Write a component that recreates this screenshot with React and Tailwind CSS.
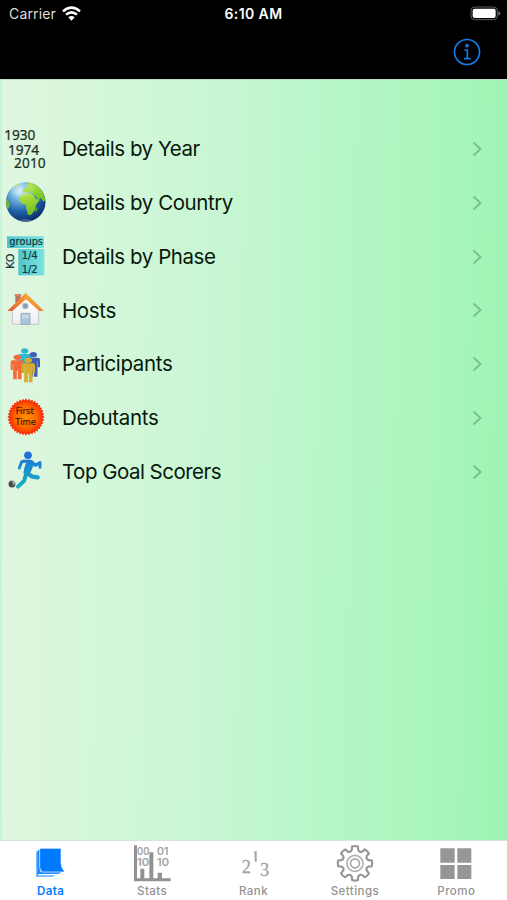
import React from "react";

// List icons share one drawing grid: three units per pixel, 150 x 162.
function ListIcon({ children }) {
  return (
    <svg className="h-[54px] w-[50px] shrink-0" viewBox="0 0 150 162">
      {children}
    </svg>
  );
}

function YearsIcon() {
  return (
    <ListIcon>
      <g fontFamily="'Noto Sans', sans-serif" fontSize="41" fill="#1c3024" stroke="#1c3024" strokeWidth="0.7">
        <text x="13" y="53" textLength="93">1930</text>
        <text x="24" y="98" textLength="93">1974</text>
        <text x="42" y="139" textLength="95">2010</text>
      </g>
    </ListIcon>
  );
}

function GlobeIcon() {
  return (
    <ListIcon>
      <defs>
        <radialGradient id="sea" cx="0.36" cy="0.22" r="0.8">
          <stop offset="0" stopColor="#d4f0fc" />
          <stop offset="0.3" stopColor="#6fb4e0" />
          <stop offset="0.65" stopColor="#2262a8" />
          <stop offset="1" stopColor="#0b2d68" />
        </radialGradient>
        <linearGradient id="land" x1="0" y1="0" x2="0.3" y2="1">
          <stop offset="0" stopColor="#b9e64a" />
          <stop offset="1" stopColor="#74c421" />
        </linearGradient>
        <clipPath id="disc"><circle cx="77" cy="81" r="59" /></clipPath>
      </defs>
      <circle cx="77" cy="81" r="59.5" fill="url(#sea)" />
      <g clipPath="url(#disc)">
        <path d="M60 66 L68 57 L84 55 L100 59 L107 71 L119 74 L108 90 L105 104 L94 119 L84 120 L79 101 L78 89 L66 86 L59 77Z" fill="url(#land)" />
        <path d="M68 53 L71 40 L83 37 L79 31 L88 21 L112 22 L130 43 L139 72 L130 80 L123 70 L116 75 L107 64 L96 55 L83 52 L74 51Z" fill="url(#land)" />
        <path d="M38 37 L47 26 L61 23 L58 30 L47 37Z" fill="#bfd985" />
        <path d="M17 68 L25 78 L30 91 L24 103 L17 97Z" fill="#72b53a" />
        <path d="M107 103 L112 96 L110 109 L106 111Z" fill="#72b53a" />
        <ellipse cx="76" cy="136" rx="20" ry="3" fill="#8fb4dc" opacity="0.4" />
        <ellipse cx="67" cy="44" rx="37" ry="20" fill="#ffffff" opacity="0.15" />
      </g>
    </ListIcon>
  );
}

function PhaseIcon() {
  return (
    <ListIcon>
      <defs>
        <linearGradient id="teal" x1="0" x2="1">
          <stop offset="0" stopColor="#4fc4cd" />
          <stop offset="1" stopColor="#7be3df" />
        </linearGradient>
      </defs>
      <rect x="21" y="22" width="111" height="35" fill="url(#teal)" />
      <rect x="55" y="60" width="78" height="79" fill="url(#teal)" />
      <g fontFamily="'DejaVu Sans', sans-serif" fill="#0e3939" stroke="#0e3939" strokeWidth="0.6">
        <text x="28" y="47" fontSize="29" textLength="101" lengthAdjust="spacingAndGlyphs">groups</text>
        <text x="65" y="91" fontSize="30" textLength="48">1/4</text>
        <text x="65" y="133" fontSize="30" textLength="48">1/2</text>
        <text x="43" y="120" fontSize="30" textLength="47" lengthAdjust="spacingAndGlyphs" transform="rotate(-90 43 120)">KO</text>
      </g>
    </ListIcon>
  );
}

function HouseIcon() {
  return (
    <ListIcon>
      <defs>
        <linearGradient id="roof" x1="0" x2="1">
          <stop offset="0" stopColor="#e65331" />
          <stop offset="0.55" stopColor="#f5a33a" />
          <stop offset="1" stopColor="#ef7d2c" />
        </linearGradient>
        <linearGradient id="wall" x1="0" y1="0" x2="0" y2="1">
          <stop offset="0" stopColor="#ffffff" />
          <stop offset="1" stopColor="#efedf3" />
        </linearGradient>
      </defs>
      <path d="M46 36H62V58H46Z" fill="#b9755d" />
      <path d="M44 33H64V39H44Z" fill="#d98663" />
      <path d="M37 77 L77 42 L116 77 V121 Q116 124 113 124 H40 Q37 124 37 121Z" fill="url(#wall)" stroke="#b3b1bd" strokeWidth="2" />
      <path d="M77 30 L132 84 L118 84 L78 49 L37 84 L22 84Z" fill="url(#roof)" />
      <circle cx="76" cy="69" r="8" fill="#718b9f" stroke="#b5bdc7" strokeWidth="4" />
      <path d="M71 69H81M76 64V74" stroke="#adc2ce" strokeWidth="1.5" />
      <path d="M63 91H90V124H63Z" fill="#a9c6dc" stroke="#94a3b8" strokeWidth="2.5" />
      <path d="M66 95H87V106H66Z" fill="#c2d8e7" />
    </ListIcon>
  );
}

function Person({ x, y, fill }) {
  return (
    <g transform={`translate(${x} ${y})`} fill={fill}>
      <ellipse cx="0" cy="8" rx="11" ry="8" />
      <path d="M-14 17 H14 Q20 17 20 23 V46 H13.5 V28 H12.5 V74 H1.5 V48 H-1.5 V74 H-12.5 V28 H-13.5 V46 H-20 V23 Q-20 17 -14 17Z" />
    </g>
  );
}

function PeopleIcon() {
  return (
    <ListIcon>
      <Person x={74} y={34} fill="#2cb8d3" />
      <Person x={100} y={45} fill="#405fb2" />
      <Person x={52} y={53} fill="#f36b39" />
      <Person x={85} y={62} fill="#d7ad2b" />
    </ListIcon>
  );
}

const sealPoints = Array.from({ length: 72 }, (_, i) => {
  const r = i % 2 ? 50 : 56;
  const a = (i * Math.PI) / 36;
  return `${(78 + r * Math.cos(a)).toFixed(1)},${(81 + r * Math.sin(a)).toFixed(1)}`;
}).join(" ");

function SealIcon() {
  return (
    <ListIcon>
      <defs>
        <radialGradient id="seal">
          <stop offset="0" stopColor="#ff9100" />
          <stop offset="0.6" stopColor="#ff6500" />
          <stop offset="1" stopColor="#f81c08" />
        </radialGradient>
      </defs>
      <polygon points={sealPoints} fill="url(#seal)" />
      <g fontFamily="'DejaVu Sans', sans-serif" fill="#3d1700" stroke="#3d1700" strokeWidth="0.5" fontSize="25">
        <text x="47" y="73" textLength="55" lengthAdjust="spacingAndGlyphs">First</text>
        <text x="46" y="104" textLength="62" lengthAdjust="spacingAndGlyphs">Time</text>
      </g>
    </ListIcon>
  );
}

function KickerIcon() {
  return (
    <ListIcon>
      <defs>
        <linearGradient id="kick" gradientUnits="userSpaceOnUse" x1="0" y1="25" x2="0" y2="135">
          <stop offset="0" stopColor="#1d6fe0" />
          <stop offset="1" stopColor="#18b4bd" />
        </linearGradient>
        <radialGradient id="ball" cx="0.7" cy="0.3">
          <stop offset="0" stopColor="#b8c4bd" />
          <stop offset="1" stopColor="#455049" />
        </radialGradient>
      </defs>
      <circle cx="84" cy="34" r="11.5" fill="#226fdc" />
      <path d="M68 47 H92 Q100 48 104 56 L92 84 L84 94 L70 88 L73 72 L78 56Z" fill="url(#kick)" />
      <g fill="none" stroke="url(#kick)" strokeLinecap="round" strokeLinejoin="round">
        <path d="M74 52 L65 53 L58 72" strokeWidth="9" />
        <path d="M95 54 L106 64 L120 56 L120 70" strokeWidth="9" />
        <path d="M80 86 L97 98 L113 100" strokeWidth="13" />
        <path d="M79 88 L72 111 L54 128" strokeWidth="12" />
      </g>
      <circle cx="36" cy="120" r="10.5" fill="url(#ball)" />
      <path d="M31 115L36 113L39 118L36 123L31 121Z" fill="#3b443e" />
    </ListIcon>
  );
}

function TabIcon({ children }) {
  return (
    <svg className="h-[42px] w-[50px]" viewBox="0 0 150 126">
      {children}
    </svg>
  );
}

function DataIcon() {
  return (
    <TabIcon>
      <path d="M31 31H37V102H90Q84 107 77 107H31Z" fill="#3d98ff" />
      <path d="M34 27H41V98H101Q98 103 91 104H36" fill="none" stroke="#fff" strokeWidth="1.5" />
      <path d="M36 27H43V92H107Q102 99 94 99H36Z" fill="#2089ff" />
      <path d="M41 22H105V67Q107 84 117 93H50Q41 89 41 78Z" fill="#007aff" stroke="#fff" strokeWidth="2" />
    </TabIcon>
  );
}

function StatsIcon() {
  return (
    <TabIcon>
      <g fontFamily="Inter, sans-serif" fontSize="29" fill="#a2a2a2" stroke="#a2a2a2" strokeWidth="0.6">
        <text x="30" y="43" textLength="37" lengthAdjust="spacingAndGlyphs">00</text>
        <text x="30" y="76" textLength="37" lengthAdjust="spacingAndGlyphs">10</text>
        <text x="90" y="43" textLength="34" lengthAdjust="spacingAndGlyphs">01</text>
        <text x="90" y="76" textLength="36" lengthAdjust="spacingAndGlyphs">10</text>
      </g>
      <path d="M21 13H30V112H131V121H21Z" fill="#929292" />
      <path d="M40 83H52V114H40ZM67 34H79V114H67ZM92 95H105V114H92Z" fill="#929292" />
    </TabIcon>
  );
}

function RankIcon() {
  return (
    <TabIcon>
      <g fontFamily="'Liberation Serif', serif" fill="#a2a2a2" stroke="#a2a2a2" strokeWidth="0.8">
        <text x="41" y="96" fontSize="55">2</text>
        <text x="96" y="105" fontSize="55">3</text>
      </g>
      <path d="M77 36L81 31H86V62H80V37H77Z" fill="#a2a2a2" />
    </TabIcon>
  );
}

const gearPath = (() => {
  const segments = [];
  for (let i = 0; i < 8; i += 1) {
    const point = (radius, degrees) => {
      const a = ((i * 45 + degrees - 90) * Math.PI) / 180;
      return `${(75 + radius * Math.cos(a)).toFixed(1)} ${(67 + radius * Math.sin(a)).toFixed(1)}`;
    };
    segments.push(
      `${i ? "L" : "M"}${point(42, -13)}L${point(51, -10)}Q${point(54, 0)} ${point(51, 10)}L${point(42, 13)}Q${point(34, 22.5)} ${point(42, 32)}`
    );
  }
  return `${segments.join("")}Z`;
})();

function SettingsIcon() {
  return (
    <TabIcon>
      <path d={gearPath} fill="none" stroke="#969696" strokeWidth="6.5" strokeLinejoin="round" />
      <circle cx="75" cy="67" r="24" fill="none" stroke="#b0b0b0" strokeWidth="5" />
      <circle cx="75" cy="67" r="13.5" fill="none" stroke="#a6a6a6" strokeWidth="5" />
    </TabIcon>
  );
}

function PromoIcon() {
  return (
    <TabIcon>
      <path d="M28 22H71V65H28ZM79 22H121V65H79ZM28 72H71V114H28ZM79 72H121V114H79Z" fill="#969696" />
    </TabIcon>
  );
}

const rows = [
  { label: "Details by Year", Icon: YearsIcon, tracking: "tracking-[-0.46px]" },
  { label: "Details by Country", Icon: GlobeIcon, tracking: "tracking-[-0.44px]" },
  { label: "Details by Phase", Icon: PhaseIcon, tracking: "tracking-[-0.44px]" },
  { label: "Hosts", Icon: HouseIcon, tracking: "tracking-[-0.36px]" },
  { label: "Participants", Icon: PeopleIcon, tracking: "tracking-[-0.36px]" },
  { label: "Debutants", Icon: SealIcon, tracking: "tracking-[-0.3px]" },
  { label: "Top Goal Scorers", Icon: KickerIcon, tracking: "tracking-[-0.52px]" },
];

const tabs = [
  { label: "Data", Icon: DataIcon, color: "text-[#007aff] font-semibold" },
  { label: "Stats", Icon: StatsIcon, color: "text-[#929292] font-medium" },
  { label: "Rank", Icon: RankIcon, color: "text-[#929292] font-medium" },
  { label: "Settings", Icon: SettingsIcon, color: "text-[#929292] font-medium" },
  { label: "Promo", Icon: PromoIcon, color: "text-[#929292] font-medium" },
];

function Header() {
  return (
    <header className="h-[79px] shrink-0 bg-black text-white">
      <div className="grid h-[27px] grid-cols-3 items-center">
        <div className="flex items-center gap-[6px] pl-[9px]">
          <span className="text-[14px] tracking-[0.15px] text-[#dedede]">Carrier</span>
          <svg className="h-[15px] w-[19px]" viewBox="0 0 57 45" fill="none" stroke="#fff" strokeWidth="7.5">
            <path d="M3 16Q28.5 -6 54 16" />
            <path d="M12 26Q28.5 12 45 26" />
            <path d="M19 34Q28.5 26 38 34L28.5 44Z" fill="#fff" stroke="none" />
          </svg>
        </div>
        <span className="text-center text-[14px] font-semibold tracking-[0.4px]">6:10 AM</span>
        <div className="flex justify-end pr-[6px]">
          <svg className="h-[15px] w-[31px]" viewBox="0 0 93 45">
            <rect x="3" y="3" width="79" height="38" rx="11" fill="none" stroke="#606060" strokeWidth="3" />
            <rect x="8" y="8" width="69" height="28" rx="6" fill="#fff" />
            <path d="M85 16Q91 18 91 22Q91 26 85 29Z" fill="#707070" />
          </svg>
        </div>
      </div>
      <div className="flex h-[50px] items-center justify-end pr-[26px]">
        <svg className="h-[28px] w-[28px]" viewBox="0 0 84 84" fill="none" stroke="#1579e7">
          <circle cx="42" cy="42" r="37.5" strokeWidth="5" />
          <path d="M34 36H43V61M33 62H53" strokeWidth="5" />
          <circle cx="42" cy="23" r="5.5" fill="#1579e7" stroke="none" />
        </svg>
      </div>
    </header>
  );
}

export default function App() {
  return (
    <div className="flex h-[900px] w-[507px] flex-col overflow-hidden font-['Inter',sans-serif]">
      <Header />
      <main className="flex-1 border-l-2 border-t border-l-[#c6f6d8] border-t-[#b9dfc2] bg-[linear-gradient(91deg,#e0f6e0_0%,#d5f7da_18%,#c8f6d3_42%,#b3f6c4_69%,#a8f5bb_88%,#9bf4b3_100%)] pt-[41.6px]">
        <ul className="-ml-[2px]">
          {rows.map(({ label, Icon, tracking }) => (
            <li key={label} className="flex h-[53.8px] items-center">
              <Icon />
              <span className={`ml-[12px] flex-1 pt-[2px] text-[20.5px] text-[#07180c] ${tracking}`}>{label}</span>
              <svg className="mr-[25px] mt-[1px] h-[16px] w-[10px]" viewBox="0 0 10 16" fill="none" stroke="#7cc08b" strokeWidth="2">
                <path d="M1.5 1.5L8.5 8L1.5 14.5" />
              </svg>
            </li>
          ))}
        </ul>
      </main>
      <nav className="grid h-[60px] shrink-0 grid-cols-5 border-t border-[#d5e5d9] bg-white">
        {tabs.map(({ label, Icon, color }) => (
          <div key={label} className={`flex flex-col items-center ${color}`}>
            <Icon />
            <span className="pt-[1px] text-[11.5px] leading-[15px] tracking-[0.45px]">{label}</span>
          </div>
        ))}
      </nav>
    </div>
  );
}
